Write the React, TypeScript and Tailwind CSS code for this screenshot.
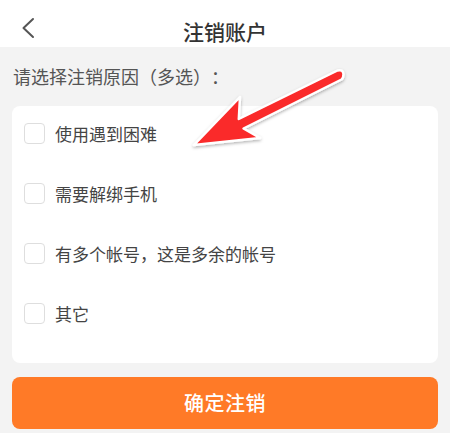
import React from "react";

const reasons = ["使用遇到困难", "需要解绑手机", "有多个帐号，这是多余的帐号", "其它"];

export default function App() {
  return (
    <div
      className="relative w-[459px] h-[433px] bg-white overflow-hidden [text-spacing-trim:space-all]"
      style={{ fontFamily: '"Noto Sans CJK SC", "Noto Sans", sans-serif' }}
    >
      <div className="w-[450px] h-[433px] bg-[#f3f3f3] flex flex-col">
        <div className="relative h-[47px] bg-white flex items-center justify-center pt-[14px]">
          <svg
            className="absolute left-[18px] top-[14px]"
            width="20"
            height="26"
            viewBox="0 0 20 26"
            fill="none"
          >
            <path d="M15 5 L5.5 14 L15 23" stroke="#555" strokeWidth="2" strokeLinecap="round" strokeLinejoin="round" />
          </svg>
          <span className="text-[21px] leading-[24px] font-medium text-[#333]">注销账户</span>
        </div>
        <div className="h-[59px] flex items-center pl-[13px] pb-[2px]">
          <span className="text-[18px] leading-[24px] text-[#555] [text-spacing-trim:space-all]">请选择注销原因（多选）：</span>
        </div>
        <div className="mx-[12px] bg-white rounded-[8px] pt-[17px] flex flex-col">
          {reasons.map((r) => (
            <div key={r} className="h-[60px] flex items-start pl-[12px]">
              <div className="flex items-center gap-[10px]">
                <div className="w-[21px] h-[21px] rounded-[4px] border border-[#dedede] bg-white" />
                <span className="text-[17px] leading-[21px] text-[#444]">{r}</span>
              </div>
            </div>
          ))}
        </div>
        <div className="mx-[12px] mt-[14px] h-[52px] rounded-[8px] bg-[#ff7a27] flex items-center justify-center">
          <span className="text-[20px] font-medium text-white tracking-[0.5px]">确定注销</span>
        </div>
      </div>
      <svg
        className="absolute left-0 top-0 pointer-events-none"
        width="459"
        height="433"
        viewBox="0 0 459 433"
      >
        <defs>
          <filter id="sh" x="-20%" y="-20%" width="140%" height="140%">
            <feDropShadow dx="0" dy="1.5" stdDeviation="1.5" floodColor="#000" floodOpacity="0.3" />
          </filter>
        </defs>
        <path
          d="M194 145 L240 97 L238.8 119 L337.5 70.5 Q343 69 343.5 74 Q343.5 78 341.5 79.5 L243.5 128.5 L260 138 Z"
          fill="#fa2a2a"
          stroke="#fff"
          strokeWidth="2.5"
          strokeLinejoin="round"
          filter="url(#sh)"
        />
      </svg>
    </div>
  );
}
